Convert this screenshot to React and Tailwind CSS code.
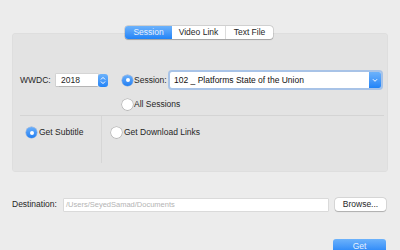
import React from "react";

function Radio({ on }) {
  if (on) {
    return (
      <div className="w-[11px] h-[11px] rounded-full bg-gradient-to-b from-[#6aaffa] to-[#1f7ff2] flex items-center justify-center shadow-[0_0_0_0.5px_rgba(0,80,200,0.4)] shrink-0">
        <div className="w-[4px] h-[4px] rounded-full bg-white" />
      </div>
    );
  }
  return <div className="w-[11px] h-[11px] rounded-full bg-white shadow-[0_0_0_0.5px_rgba(0,0,0,0.25),0_0.5px_1px_rgba(0,0,0,0.15)] shrink-0" />;
}

export default function App() {
  return (
    <div className="w-[400px] h-[250px] bg-[#ececec] overflow-hidden font-['Liberation_Sans',Arial,sans-serif] text-[8.5px] text-[#262626]">
      <div className="pt-[26px] flex justify-center pr-[2px] relative z-10 h-[39px]">
        <div className="flex h-[13px] rounded-[3px] bg-white shadow-[0_0_0_0.5px_rgba(0,0,0,0.2),0_0.5px_1px_rgba(0,0,0,0.2)] overflow-hidden">
          <div className="w-[47px] flex items-center justify-center bg-gradient-to-b from-[#6cb2fb] to-[#1e83f7] text-[#e6f0fd]">Session</div>
          <div className="w-[54px] flex items-center justify-center border-r border-[#dcdcdc]">Video Link</div>
          <div className="w-[47px] flex items-center justify-center">Text File</div>
        </div>
      </div>
      <div className="mx-[12px] -mt-[6px] h-[139px] bg-[#e3e3e3] rounded-[4px] shadow-[inset_0_0_0_0.5px_rgba(0,0,0,0.04)]">
        <div className="flex items-start pl-[8px] pt-[39px]">
          <div className="flex items-center h-[16px]">
            <div className="w-[36px]">WWDC:</div>
            <div className="w-[42px] h-[12px] bg-white shadow-[0_0_0_0.5px_rgba(0,0,0,0.12),0_0.5px_1px_rgba(0,0,0,0.15)] flex items-center pl-[5px]">2018</div>
            <div className="w-[10px] h-[13px] rounded-[3px] bg-gradient-to-b from-[#6cb2fb] to-[#1e83f7] flex items-center justify-center">
              <svg width="6" height="9" viewBox="0 0 6 9" fill="none" stroke="white" strokeWidth="1" strokeLinecap="round" strokeLinejoin="round">
                <path d="M1.2 3.2 L3 1.4 L4.8 3.2" />
                <path d="M1.2 5.8 L3 7.6 L4.8 5.8" />
              </svg>
            </div>
          </div>
          <div className="ml-[14px] flex flex-col">
            <div className="flex items-center h-[16px]">
              <Radio on />
              <div className="ml-[1px] w-[36px]">Session:</div>
              <div className="w-[211px] h-[16px] rounded-[2px] bg-white shadow-[0_0_0_2px_rgba(120,170,235,0.55)] flex items-center">
                <div className="flex-1 pl-[4px] text-[#111]">102 _ Platforms State of the Union</div>
                <div className="w-[12px] h-[16px] rounded-r-[2px] bg-gradient-to-b from-[#6cb2fb] to-[#1e83f7] flex items-center justify-center">
                  <svg width="6" height="5" viewBox="0 0 6 5" fill="none" stroke="white" strokeWidth="1" strokeLinecap="round" strokeLinejoin="round">
                    <path d="M1.2 1.5 L3 3.3 L4.8 1.5" />
                  </svg>
                </div>
              </div>
            </div>
            <div className="flex items-center h-[11px] mt-[11px]">
              <Radio />
              <div className="ml-[1px]">All Sessions</div>
            </div>
          </div>
        </div>
        <div className="mt-[5px] h-px bg-[#d4d4d4] ml-[8px] mr-[4px]" />
        <div className="flex h-[51px]">
          <div className="w-[82px] ml-[8px] border-r border-[#d6d6d6] pl-[6px] pt-[11px] mb-[4px]">
            <div className="flex items-center h-[11px]">
              <Radio on />
              <div className="ml-[2px]">Get Subtitle</div>
            </div>
          </div>
          <div className="pl-[9px] pt-[11px]">
            <div className="flex items-center h-[11px]">
              <Radio />
              <div className="ml-[2px]">Get Download Links</div>
            </div>
          </div>
        </div>
      </div>
      <div className="mt-[26px] flex items-center h-[13px] pl-[12px]">
        <div className="w-[52px]">Destination:</div>
        <div className="w-[264px] h-[12px] bg-white shadow-[0_0_0_0.5px_rgba(0,0,0,0.15)] flex items-center pl-[2px] text-[7.5px] text-[#b4b4b4]">/Users/SeyedSamad/Documents</div>
        <div className="ml-[7px] w-[51px] h-[13px] rounded-[3px] bg-white shadow-[0_0_0_0.5px_rgba(0,0,0,0.15),0_0.5px_1px_rgba(0,0,0,0.2)] flex items-center justify-center">Browse...</div>
      </div>
      <div className="mt-[28px] flex justify-end pr-[14px]">
        <div className="w-[53px] h-[14px] rounded-[3px] bg-gradient-to-b from-[#6cb2fb] to-[#1e83f7] flex items-center justify-center text-[#e6f0fd]">Get</div>
      </div>
    </div>
  );
}
